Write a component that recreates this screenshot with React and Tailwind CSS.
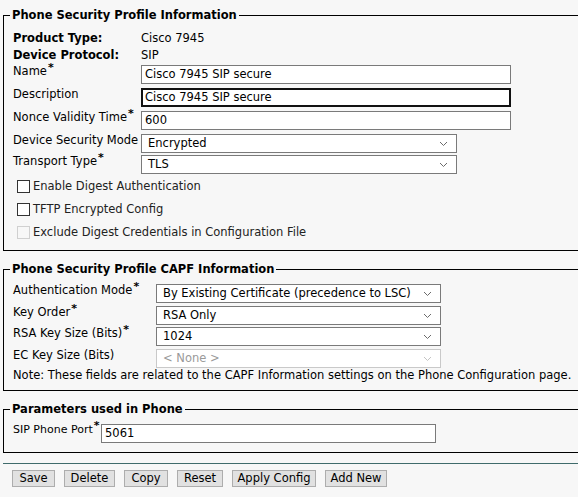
import React from 'react'

const FONT = { fontFamily: '"DejaVu Sans", Verdana, sans-serif' }

function Req() {
  return <span className="relative top-[-4px] ml-[1px] text-[11px] font-bold leading-none">*</span>
}

function Chevron({ muted }) {
  return (
    <svg className="absolute right-[8px] top-1/2 -translate-y-1/2 pointer-events-none" width="9" height="6" viewBox="0 0 9 6">
      <path d="M1 1 L4.5 4.5 L8 1" fill="none" stroke={muted ? '#c4c4c4' : '#6b6b6b'} strokeWidth="1" />
    </svg>
  )
}

function Select({ value, width, disabled }) {
  return (
    <div className={`relative h-[19px] bg-white border ${disabled ? 'border-[#c9c9c9] text-[#9a9a9a]' : 'border-[#7a7a7a] text-black'}`} style={{ width }}>
      <div className="pl-[6px] leading-[17px] text-[11.5px]">{value}</div>
      <Chevron muted={disabled} />
    </div>
  )
}

function TextInput({ value, width, focused }) {
  return (
    <div className={`h-[19px] bg-white ${focused ? 'border-2 border-[#111] pl-[2px] leading-[15px]' : 'border border-[#7a7a7a] pl-[3px] leading-[17px]'} text-[11.5px] text-black`} style={{ width }}>
      {value}
    </div>
  )
}

function Checkbox({ label, disabled }) {
  return (
    <div className="flex items-center h-[23px] pl-[4px]">
      <span className={`w-[13px] h-[13px] border ${disabled ? 'border-[#d0d0d0] bg-[#f7f7f7]' : 'border-[#333] bg-white'}`} />
      <span className="ml-[3px] text-[11.5px] text-[#222]">{label}</span>
    </div>
  )
}

function Fieldset({ title, className, children }) {
  return (
    <fieldset className={`border border-black w-[600px] pl-[9px] ${className}`}>
      <legend className="ml-[-3px] px-[2px] text-[11.5px] font-bold leading-[14px] text-black">{title}</legend>
      {children}
    </fieldset>
  )
}

function Row({ label, req, children, h = 23, labelW = 128, small }) {
  return (
    <div className="flex items-start" style={{ height: h }}>
      <div className={`${small ? 'text-[11px]' : 'text-[11.5px]'} leading-[14px] text-black whitespace-nowrap`} style={{ width: labelW }}>
        {label}{req && <Req />}
      </div>
      <div className="mt-[1px]">{children}</div>
    </div>
  )
}

const BUTTONS = [
  ['Save', 43], ['Delete', 51], ['Copy', 44], ['Reset', 46], ['Apply Config', 84], ['Add New', 62],
]

export default function App() {
  return (
    <div className="w-[578px] h-[497px] overflow-hidden bg-[#f7f7f7] pl-[3px]" style={FONT}>
      <Fieldset title="Phone Security Profile Information" className="mt-[8px] pb-[6px]">
        <div className="pt-[8px]">
          <div className="flex items-center h-[17px] text-[11.5px]">
            <span className="w-[128px] font-bold">Product Type:</span>
            <span>Cisco 7945</span>
          </div>
          <div className="flex items-center h-[17px] text-[11.5px]">
            <span className="w-[128px] font-bold">Device Protocol:</span>
            <span>SIP</span>
          </div>
          <Row label="Name" req><TextInput value="Cisco 7945 SIP secure" width={370} /></Row>
          <Row label="Description"><TextInput value="Cisco 7945 SIP secure" width={370} focused /></Row>
          <Row label="Nonce Validity Time" req><TextInput value="600" width={370} /></Row>
          <Row label="Device Security Mode" h={21}><Select value="Encrypted" width={316} /></Row>
          <Row label="Transport Type" req h={21}><Select value="TLS" width={316} /></Row>
          <Checkbox label="Enable Digest Authentication" />
          <Checkbox label="TFTP Encrypted Config" />
          <Checkbox label="Exclude Digest Credentials in Configuration File" disabled />
        </div>
      </Fieldset>

      <Fieldset title="Phone Security Profile CAPF Information" className="mt-[11px] pb-[8px]">
        <div className="pt-[7px]">
          <Row label="Authentication Mode" req h={22} labelW={143}><Select value="By Existing Certificate (precedence to LSC)" width={285} /></Row>
          <Row label="Key Order" req h={21} labelW={143}><Select value="RSA Only" width={285} /></Row>
          <Row label="RSA Key Size (Bits)" req h={22} labelW={143}><Select value="1024" width={285} /></Row>
          <Row label="EC Key Size (Bits)" h={21} labelW={143}><Select value="< None >" width={285} disabled /></Row>
          <div className="h-[13px] leading-[13px] text-[11.5px] text-black whitespace-nowrap">
            Note: These fields are related to the CAPF Information settings on the Phone Configuration page.
          </div>
        </div>
      </Fieldset>

      <Fieldset title="Parameters used in Phone" className="mt-[11px] pb-[8px]">
        <div className="pt-[7px]">
          <Row label="SIP Phone Port" req small h={21} labelW={88}><TextInput value="5061" width={335} /></Row>
        </div>
      </Fieldset>

      <div className="mt-[10px] h-px bg-[#3f6b6b] w-[600px]" />

      <div className="flex gap-[9px] pl-[9px] mt-[6px]">
        {BUTTONS.map(([b, w]) => (
          <button key={b} className="h-[17px] bg-[#e1e1e1] border border-[#adadad] text-[11.5px] leading-[15px] text-black" style={{ width: w }}>
            {b}
          </button>
        ))}
      </div>
    </div>
  )
}
